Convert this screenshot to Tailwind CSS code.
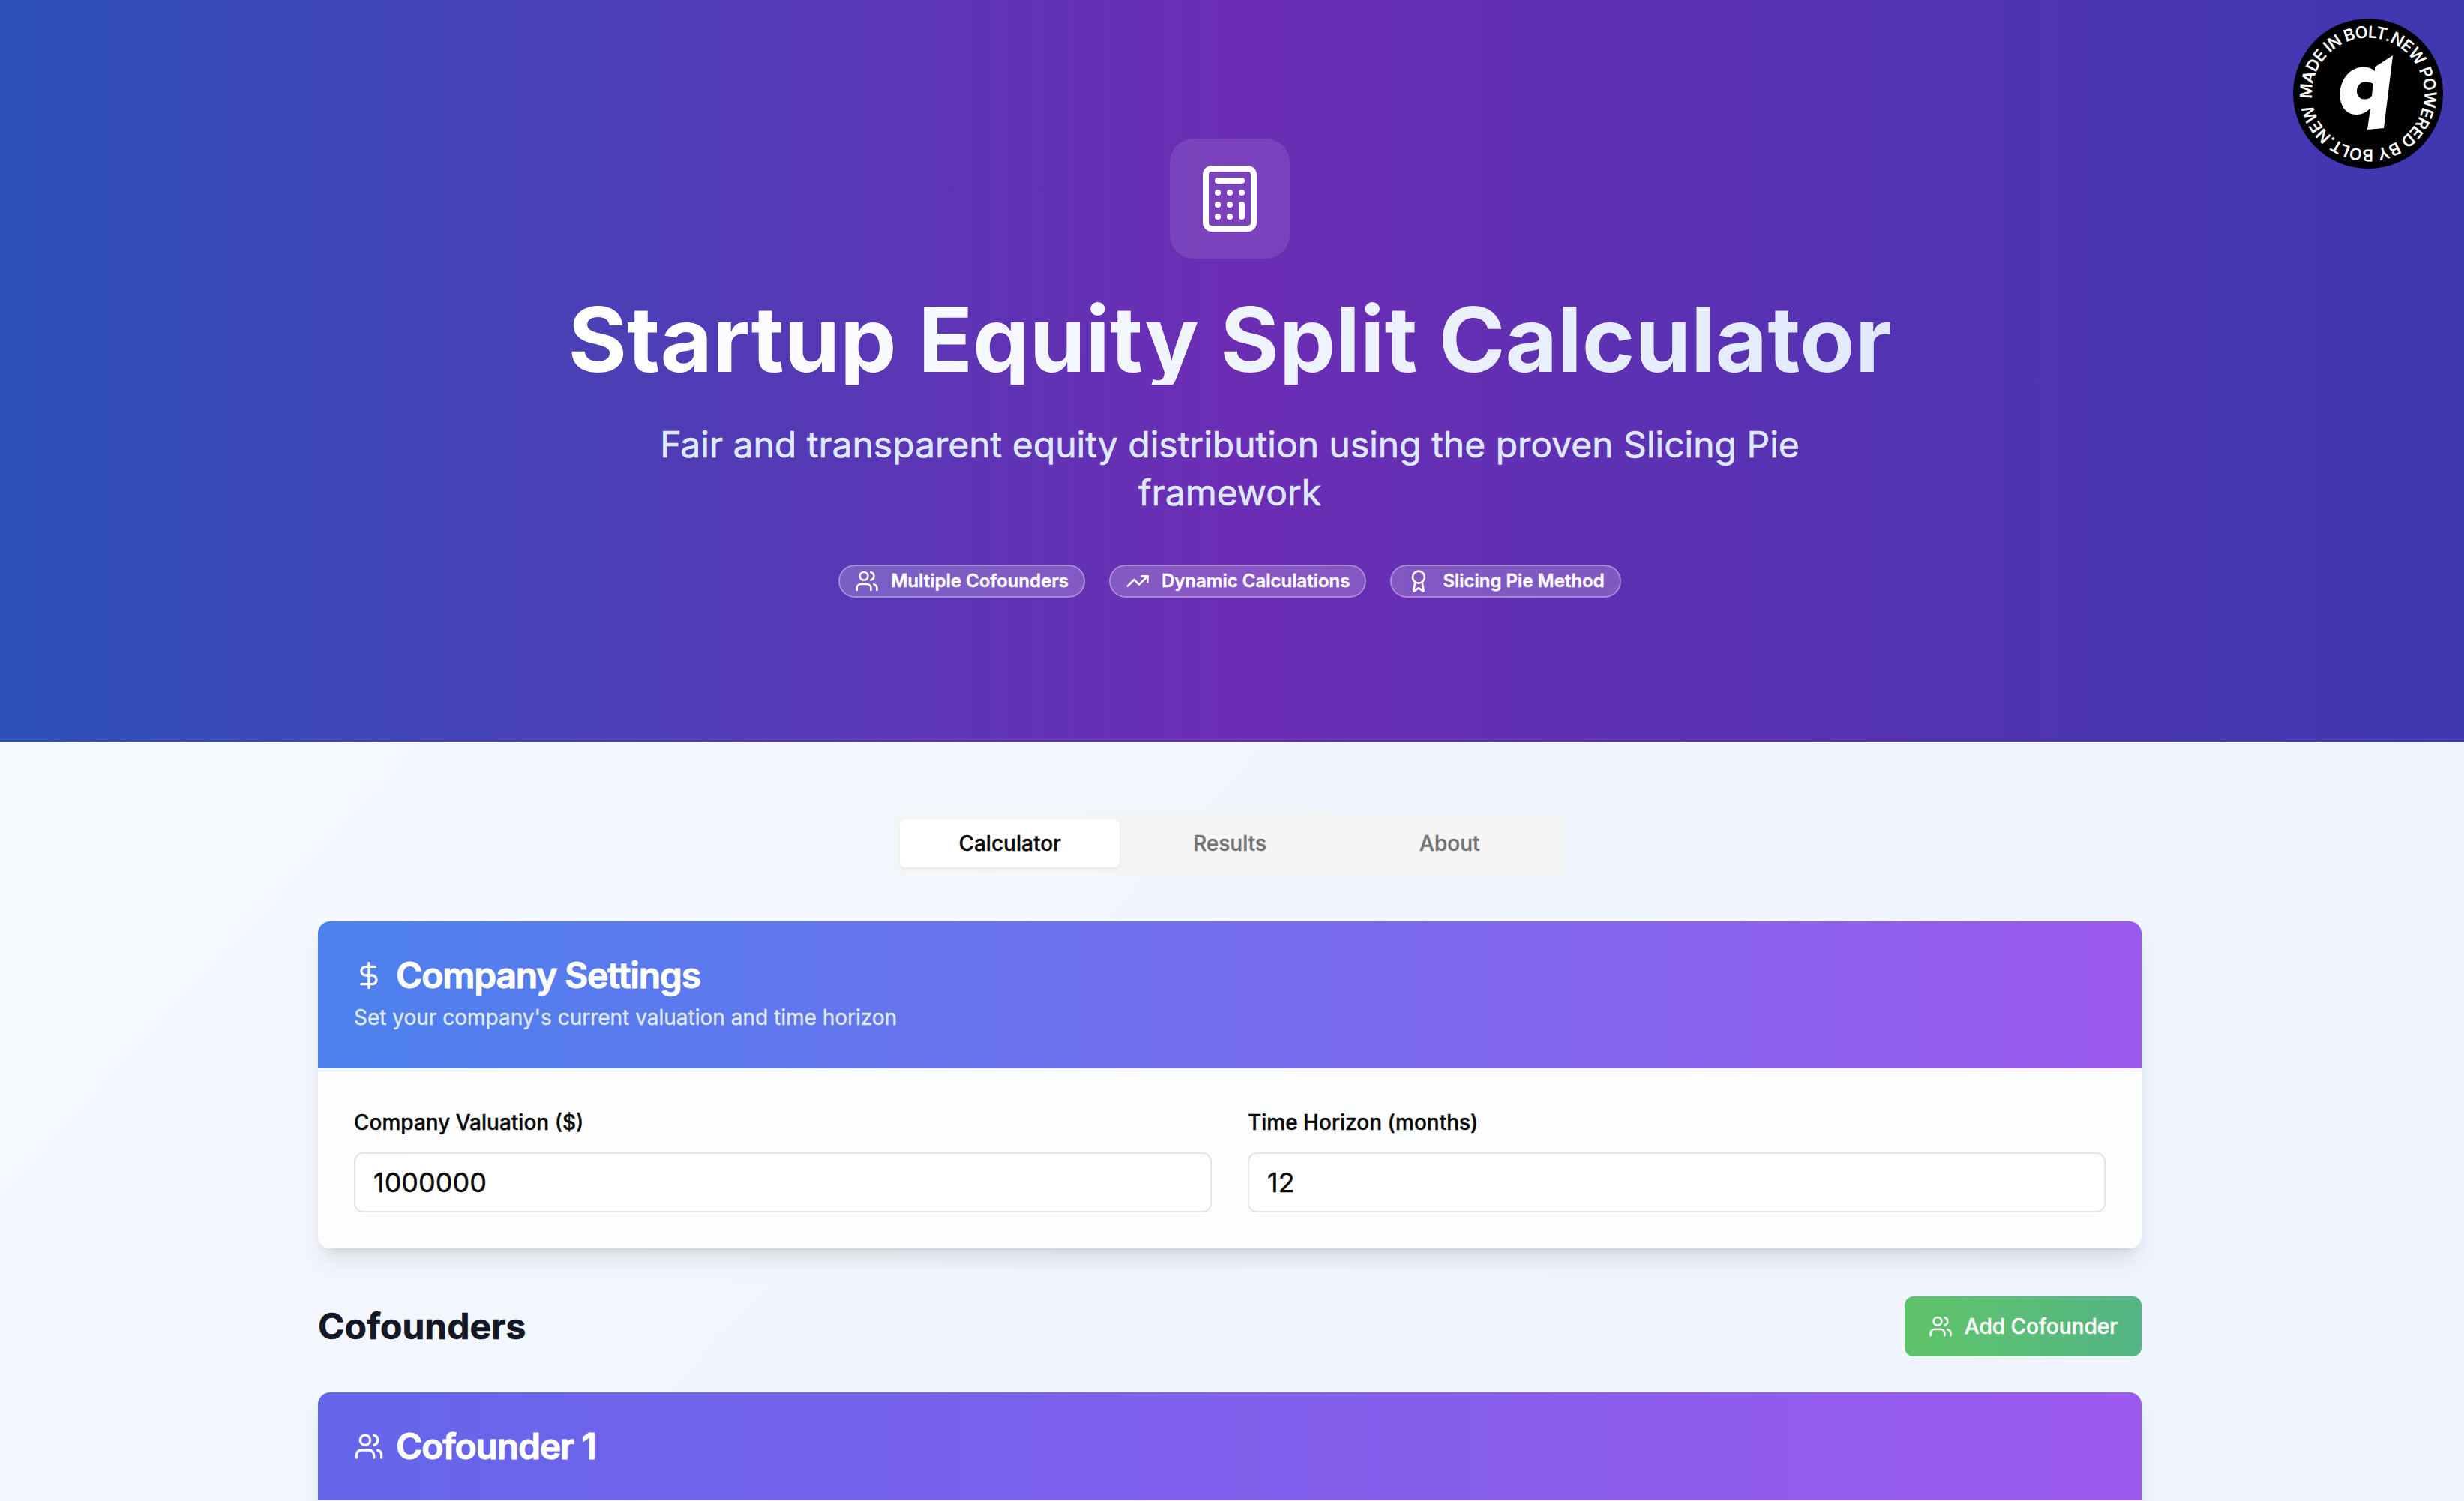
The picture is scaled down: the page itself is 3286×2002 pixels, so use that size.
<!DOCTYPE html>
<html lang="en">
<head>
<meta charset="utf-8">
<title>Startup Equity Split Calculator</title>
<script src="https://cdn.jsdelivr.net/npm/@tailwindcss/browser@4"></script>
</head>
<body class="relative h-[2002px] w-[3286px] overflow-hidden bg-[linear-gradient(to_bottom_right,#f8fafc,#f0f5fe_50%,#eff2fe)] bg-[length:100%_3600px] bg-no-repeat font-['Inter',sans-serif] text-[#0a0a0a] antialiased">
<svg class="hidden">
  <symbol id="users" viewBox="0 0 24 24" fill="none" stroke="currentColor" stroke-width="2" stroke-linecap="round" stroke-linejoin="round"><path d="M16 21v-2a4 4 0 0 0-4-4H6a4 4 0 0 0-4 4v2"/><circle cx="9" cy="7" r="4"/><path d="M22 21v-2a4 4 0 0 0-3-3.87"/><path d="M16 3.13a4 4 0 0 1 0 7.75"/></symbol>
</svg>

<header class="h-[989px] bg-[linear-gradient(to_right,#2c50b6,#6c2db4_50%,#3e38b0)] pt-[185px] pr-[6px]">
  <div class="flex flex-col items-center text-center">
    <div class="mb-12 rounded-[32px] bg-white/10 p-8 text-white">
      <svg class="size-24" viewBox="0 0 24 24" fill="none" stroke="currentColor" stroke-width="2" stroke-linecap="round" stroke-linejoin="round"><rect width="16" height="20" x="4" y="2" rx="2"/><path d="M8 6h8M16 14v4M16 10h.01M12 10h.01M8 10h.01M12 14h.01M8 14h.01M12 18h.01M8 18h.01"/></svg>
    </div>
    <h1 class="mb-12 bg-[linear-gradient(to_right,#ffffff,#e0eafc)] bg-clip-text text-[120px] leading-none font-bold text-transparent">Startup Equity Split Calculator</h1>
    <p class="mb-16 w-[1536px] text-[48px] leading-[64px] text-[#dfe9fc] [-webkit-text-stroke:0.6px]">Fair and transparent equity distribution using the proven Slicing Pie framework</p>
    <div class="flex gap-8 text-[24px] leading-8 font-semibold text-white">
      <div class="flex items-center gap-4 rounded-full border-2 border-white/30 bg-white/20 px-5 py-1 [-webkit-text-stroke:0.4px]"><svg class="size-8"><use href="#users"/></svg>Multiple Cofounders</div>
      <div class="flex items-center gap-4 rounded-full border-2 border-white/30 bg-white/20 px-5 py-1 [-webkit-text-stroke:0.4px]"><svg class="size-8" viewBox="0 0 24 24" fill="none" stroke="currentColor" stroke-width="2" stroke-linecap="round" stroke-linejoin="round"><path d="m22 7-8.500 8.500-5-5L2 17"/><path d="M16 7h6v6"/></svg>Dynamic Calculations</div>
      <div class="flex items-center gap-4 rounded-full border-2 border-white/30 bg-white/20 px-5 py-1 [-webkit-text-stroke:0.4px]"><svg class="size-8" viewBox="0 0 24 24" fill="none" stroke="currentColor" stroke-width="2" stroke-linecap="round" stroke-linejoin="round"><path d="m15.477 12.890 1.515 8.526a.5.5 0 0 1-.81.470l-3.580-2.687a1 1 0 0 0-1.197 0l-3.586 2.686a.5.5 0 0 1-.810-.469l1.514-8.526"/><circle cx="12" cy="8" r="6"/></svg>Slicing Pie Method</div>
    </div>
  </div>
</header>

<main class="ml-[424px] w-[2432px] pt-24">
  <div class="mx-auto mb-16 grid h-20 w-[896px] grid-cols-3 items-center rounded-xl bg-[#f5f5f5] p-2 text-center text-[28px] leading-[40px] font-medium text-[#737373] [-webkit-text-stroke:0.4px]">
    <div class="rounded-lg bg-white py-3 text-[#0a0a0a] shadow-[0_2px_4px_rgba(0,0,0,0.05)]">Calculator</div>
    <div>Results</div>
    <div>About</div>
  </div>

  <section class="mb-16 overflow-hidden rounded-2xl bg-white/80 shadow-[0_20px_30px_-6px_rgba(0,0,0,0.1),0_8px_12px_-8px_rgba(0,0,0,0.1)]">
    <div class="flex flex-col gap-3 bg-[linear-gradient(to_right,#4c81ee,#9c59ee)] p-12 text-white">
      <h2 class="flex items-center gap-4 text-[48px] leading-none font-semibold tracking-tight [-webkit-text-stroke:1px]"><svg class="size-10" viewBox="0 0 24 24" fill="none" stroke="currentColor" stroke-width="2" stroke-linecap="round" stroke-linejoin="round"><path d="M12 2v20M17 5H9.500a3.500 3.500 0 0 0 0 7h5a3.500 3.500 0 0 1 0 7H6"/></svg>Company Settings</h2>
      <p class="text-[28px] leading-[40px] text-[#dfe9fc] [-webkit-text-stroke:0.4px]">Set your company's current valuation and time horizon</p>
    </div>
    <div class="grid grid-cols-2 gap-12 p-12 text-[28px] leading-[48px] font-medium [-webkit-text-stroke:0.4px]">
      <div class="flex flex-col gap-4">Company Valuation ($)
        <div class="flex h-20 items-center rounded-xl border-2 border-[#e5e5e5] bg-white px-6 text-[36px] font-normal">1000000</div>
      </div>
      <div class="flex flex-col gap-4">Time Horizon (months)
        <div class="flex h-20 items-center rounded-xl border-2 border-[#e5e5e5] bg-white px-6 text-[36px] font-normal">12</div>
      </div>
    </div>
  </section>

  <div class="mb-12 flex items-center justify-between">
    <h2 class="text-[48px] leading-[64px] font-bold text-[#131827] [-webkit-text-stroke:0.6px]">Cofounders</h2>
    <div class="flex h-20 items-center gap-4 rounded-xl bg-[linear-gradient(to_right,#5fc469,#54b585)] px-8 text-[28px] font-medium text-[#fafafa] [-webkit-text-stroke:0.5px]"><svg class="size-8"><use href="#users"/></svg>Add Cofounder</div>
  </div>

  <section class="h-[600px] overflow-hidden rounded-2xl bg-white/80 shadow-[0_20px_30px_-6px_rgba(0,0,0,0.1),0_8px_12px_-8px_rgba(0,0,0,0.1)]">
    <div class="bg-[linear-gradient(to_right,#6466e9,#9c59ee)] p-12 text-white">
      <h2 class="flex items-center gap-4 text-[48px] leading-none font-semibold tracking-tight [-webkit-text-stroke:1px]"><svg class="size-10"><use href="#users"/></svg>Cofounder 1</h2>
    </div>
  </section>
</main>

<svg class="absolute top-[25px] left-[3058px] size-[200px]" viewBox="0 0 200 200">
  <circle cx="100" cy="100" r="100" fill="#000"/>
  <path id="ring" fill="none" d="M25.330 107A75 75 0 0 1 174.670 93A75 75 0 0 1 25.330 107"/>
  <text class="font-['Inter',sans-serif] text-[22px] font-semibold" fill="#fff"><textPath href="#ring" textLength="461" lengthAdjust="spacing">MADE IN BOLT.NEW POWERED BY BOLT.NEW</textPath></text>
  <path fill="#fff" fill-rule="evenodd" d="M133 49L109 64.500V70C104 65.500 98 64 92 64.500C74 66 62.500 83 62.500 101C62.500 117 71 128 84 128C92 128 98 124.500 103 119.500L99 148L121 146ZM97 84C102 84 105 86 106.500 87L105 103C103 106 99.500 107.500 95 107.500C88.500 107.500 85 102.500 85 96.500C85 89.500 90 84 97 84Z"/>
</svg>
</body>
</html>
